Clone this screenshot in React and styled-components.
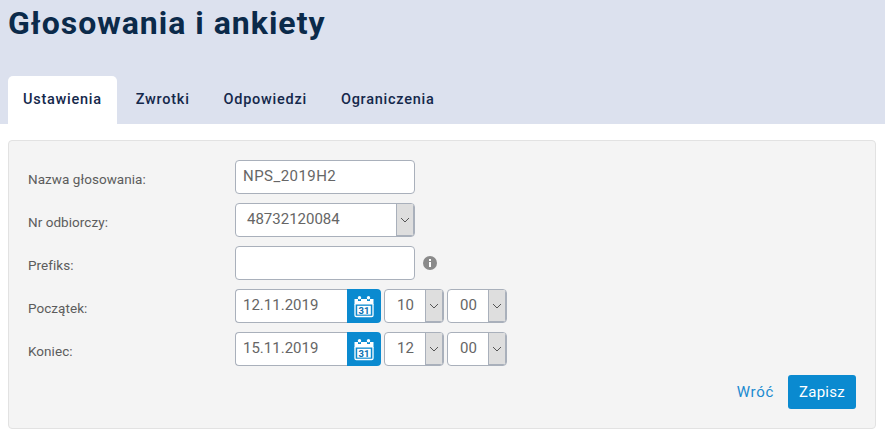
import React from 'react';
import styled, { createGlobalStyle } from 'styled-components';

const GlobalStyle = createGlobalStyle`
    html, body {
        margin: 0;
        padding: 0;
        background: #fff;
        font-family: "Roboto", "Liberation Sans", sans-serif;
    }
`;

const Chevron = () => (
    <svg width="10" height="6" viewBox="0 0 10 6" fill="none">
        <path d="M1 1l4 4 4-4" stroke="#555" strokeWidth="1" />
    </svg>
);

const CalendarIcon = () => (
    <svg width="20" height="24" viewBox="0 0 20 24" fill="none">
        <path d="M0.5 5h3.5v2h3V5h6v2h3V5h3.5v5.5H0.5z" fill="#fff" />
        <circle cx="5.5" cy="3.8" r="1.7" fill="#fff" />
        <circle cx="14.5" cy="3.8" r="1.7" fill="#fff" />
        <path d="M1 10v11.2c0 .7.5 1.3 1.3 1.3h15.4c.8 0 1.3-.6 1.3-1.3V10" stroke="#fff" strokeWidth="1.3" />
        <rect x="3.2" y="11.8" width="13.6" height="8.8" fill="#fff" />
        <text x="10" y="19.6" textAnchor="middle" fontSize="9.5" fontWeight="700" fontFamily="Roboto, sans-serif" fill="#0a6fb0">31</text>
    </svg>
);

const InfoIcon = () => (
    <svg width="14" height="14" viewBox="0 0 14 14">
        <circle cx="7" cy="7" r="7" fill="#8a8a8a" />
        <rect x="6" y="6" width="2" height="5" fill="#fff" />
        <rect x="6" y="3" width="2" height="2" fill="#fff" />
    </svg>
);

const Select = ({ value, wide }) => (
    <StSelect $wide={wide}>
        <StSelectValue $wide={wide}>{value}</StSelectValue>
        <StSelectArrow>
            <Chevron />
        </StSelectArrow>
    </StSelect>
);

const DateTime = ({ date, hour }) => (
    <StControls>
        <StDateInput>{date}</StDateInput>
        <StCalendarButton>
            <CalendarIcon />
        </StCalendarButton>
        <Select value={hour} />
        <Select value="00" />
    </StControls>
);

const App = () => {
    return (
        <>
            <GlobalStyle />
            <StHeader>
                <StTitle>Głosowania i ankiety</StTitle>
                <StTabs>
                    <StTab $active>Ustawienia</StTab>
                    <StTab>Zwrotki</StTab>
                    <StTab>Odpowiedzi</StTab>
                    <StTab>Ograniczenia</StTab>
                </StTabs>
            </StHeader>
            <StPanel>
                <StRow>
                    <StLabel>Nazwa głosowania:</StLabel>
                    <StInput>NPS_2019H2</StInput>
                </StRow>
                <StRow>
                    <StLabel>Nr odbiorczy:</StLabel>
                    <Select value="48732120084" wide />
                </StRow>
                <StRow>
                    <StLabel>Prefiks:</StLabel>
                    <StInput />
                    <StInfo>
                        <InfoIcon />
                    </StInfo>
                </StRow>
                <StRow>
                    <StLabel>Początek:</StLabel>
                    <DateTime date="12.11.2019" hour="10" />
                </StRow>
                <StRow>
                    <StLabel>Koniec:</StLabel>
                    <DateTime date="15.11.2019" hour="12" />
                </StRow>
                <StActions>
                    <StBackLink>Wróć</StBackLink>
                    <StSaveButton>Zapisz</StSaveButton>
                </StActions>
            </StPanel>
        </>
    );
};

export default App;

const StHeader = styled.header`
    height: 124px;
    padding: 0 8px;
    box-sizing: border-box;
    background-color: #dce1ee;
    display: flex;
    flex-direction: column;
    justify-content: space-between;
`;

const StTitle = styled.h1`
    margin: 2px 0 0;
    font-size: 32px;
    line-height: 42px;
    font-weight: 700;
    letter-spacing: 1px;
    color: #0b2a4a;
`;

const StTabs = styled.nav`
    display: flex;
`;

const StTab = styled.div`
    height: 48px;
    box-sizing: border-box;
    padding: 0 ${(p) => (p.$active ? '15px' : '17px')} 2px;
    margin-right: ${(p) => (p.$active ? '2px' : '0')};
    display: flex;
    align-items: center;
    border-radius: 5px 5px 0 0;
    background-color: ${(p) => (p.$active ? '#fff' : 'transparent')};
    font-size: 14.5px;
    font-weight: 500;
    letter-spacing: 0.74px;
    color: #14284b;
`;

const StPanel = styled.main`
    margin: 16px 9px 0 8px;
    height: 289px;
    box-sizing: border-box;
    padding: 19px 19px 0;
    background-color: #f4f4f4;
    border: 1px solid #e2e2e2;
    border-radius: 4px;
    display: flex;
    flex-direction: column;
    gap: 9px;
`;

const StRow = styled.div`
    display: flex;
    align-items: center;
    height: 34px;
`;

const StLabel = styled.label`
    width: 207px;
    padding-top: 4px;
    font-size: 13.5px;
    letter-spacing: 0.05px;
    color: #5c5c5c;
`;

const StInput = styled.div`
    width: 180px;
    height: 34px;
    box-sizing: border-box;
    padding: 0 7px 2px;
    display: flex;
    align-items: center;
    background-color: #fff;
    border: 1px solid #a9b0bb;
    border-radius: 4px;
    font-size: 15px;
    letter-spacing: 0.45px;
    color: #666;
`;

const StInfo = styled.span`
    display: flex;
    margin-left: 8px;
`;

const StControls = styled.div`
    display: flex;
    gap: 3px;
`;

const StDateInput = styled(StInput)`
    width: 112px;
    margin-right: -3px;
    border-right: none;
    border-radius: 4px 0 0 4px;
    letter-spacing: 0;
`;

const StCalendarButton = styled.button`
    width: 34px;
    height: 34px;
    padding: 0;
    border: none;
    border-radius: 0 4px 4px 0;
    background-color: #0a8ad0;
    display: flex;
    align-items: center;
    justify-content: center;
`;

const StSelect = styled.div`
    width: ${(p) => (p.$wide ? '180px' : '60px')};
    height: 34px;
    box-sizing: border-box;
    display: flex;
    background-color: #fff;
    border: 1px solid #a9b0bb;
    border-radius: 4px;
    overflow: hidden;
`;

const StSelectValue = styled.div`
    flex: 1;
    display: flex;
    align-items: center;
    padding: 0 0 2px ${(p) => (p.$wide ? '11px' : '12px')};
    font-size: 15px;
    color: #666;
`;

const StSelectArrow = styled.div`
    width: 16px;
    display: flex;
    align-items: center;
    justify-content: center;
    background-color: #dedede;
    border-left: 1px solid #a9b0bb;
    border-right: 1px solid #a9b0bb;
    border-bottom: 1px solid #a9b0bb;
`;

const StActions = styled.div`
    display: flex;
    justify-content: flex-end;
    align-items: center;
    gap: 14px;
`;

const StBackLink = styled.a`
    font-size: 15px;
    letter-spacing: 0.7px;
    color: #1a8ad0;
`;

const StSaveButton = styled.button`
    width: 68px;
    height: 34px;
    border: none;
    border-radius: 3px;
    background-color: #0a8ad0;
    color: #fff;
    font-family: inherit;
    font-size: 15px;
    letter-spacing: 0.3px;
`;
